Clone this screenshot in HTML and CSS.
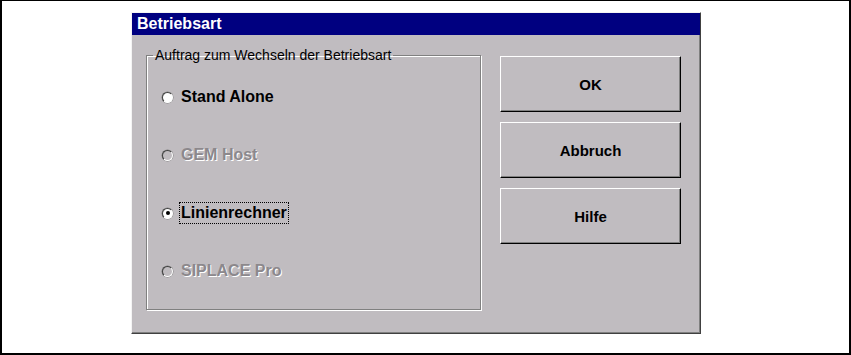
FILE: index.html
```html
<!DOCTYPE html>
<html lang="de">
<head>
    <meta charset="UTF-8">
    <title>Betriebsart</title>
    <link rel="stylesheet" href="styles.css">
</head>
<body>
    <div class="frame">
        <div class="dialog">
            <div class="titlebar">Betriebsart</div>

            <div class="dialog-body">
                <fieldset class="group">
                    <legend>Auftrag zum Wechseln der Betriebsart</legend>

                    <div class="option">
                        <span class="radio"></span>
                        <span class="label">Stand Alone</span>
                    </div>
                    <div class="option disabled">
                        <span class="radio"></span>
                        <span class="label">GEM Host</span>
                    </div>
                    <div class="option">
                        <span class="radio checked"></span>
                        <span class="label focused">Linienrechner</span>
                    </div>
                    <div class="option disabled">
                        <span class="radio"></span>
                        <span class="label">SIPLACE Pro</span>
                    </div>
                </fieldset>

                <div class="buttons">
                    <button>OK</button>
                    <button>Abbruch</button>
                    <button>Hilfe</button>
                </div>
            </div>
        </div>
    </div>
</body>
</html>
```

FILE: styles.css
```css
body {
    margin: 0;
    background: #fff;
    font-family: 'Liberation Sans', Arial, sans-serif;
}

.frame {
    height: 355px;
    box-sizing: border-box;
    border: 2px solid #000;
    border-top-width: 1px;
    padding: 11px 0 0 129px;
}

.dialog {
    width: 570px;
    height: 322px;
    box-sizing: border-box;
    background: #c0bcc0;
    border: 1px solid;
    border-color: #f4f4f4 #404040 #404040 #f4f4f4;
    box-shadow: inset -1px -1px 0 #808080;
}

.titlebar {
    height: 22px;
    line-height: 22px;
    background: #000080;
    color: #fff;
    font-size: 16px;
    font-weight: bold;
    padding-left: 5px;
}

.dialog-body {
    display: flex;
    gap: 19px;
    padding: 12px 19px 0 14px;
}

.group {
    margin: 0;
    width: 335px;
    box-sizing: border-box;
    padding: 5px 0 9px;
    border: 1px solid #808080;
    box-shadow: inset 1px 1px 0 #fff, 1px 1px 0 #fff;
}

.group legend {
    font-size: 14px;
    line-height: 16px;
    margin-left: 6px;
    padding: 0 2px;
    color: #000;
}

.option {
    display: flex;
    align-items: center;
    gap: 6px;
    height: 58px;
    padding-left: 15px;
}

.radio {
    width: 11px;
    height: 11px;
    box-sizing: border-box;
    border-radius: 50%;
    background: #fff;
    border: 1px solid;
    border-color: #404040 #fff #fff #404040;
    box-shadow: 0 0 0 0.5px #808080;
    display: flex;
    align-items: center;
    justify-content: center;
}

.radio.checked::after {
    content: "";
    width: 4px;
    height: 4px;
    border-radius: 50%;
    background: #000;
}

.label {
    font-size: 16px;
    font-weight: bold;
    line-height: 18px;
    padding: 1px;
    border: 1px dotted transparent;
    color: #000;
}

.label.focused {
    border-color: #000;
}

.option.disabled .radio {
    background: #c0bcc0;
}

.option.disabled .label {
    color: #8c888c;
    text-shadow: 1px 1px 0 #fff;
}

.buttons {
    display: flex;
    flex-direction: column;
    gap: 10px;
    margin-top: 9px;
}

.buttons button {
    width: 181px;
    height: 56px;
    background: #c0bcc0;
    border: 1px solid;
    border-color: #fff #000 #000 #fff;
    box-shadow: inset -1px -1px 0 #808080;
    font-family: 'Liberation Sans', Arial, sans-serif;
    font-size: 15px;
    font-weight: bold;
    color: #000;
    padding: 0;
}
```
